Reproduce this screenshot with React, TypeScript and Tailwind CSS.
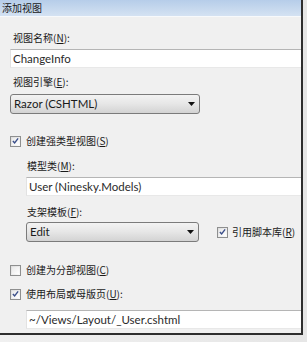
import React from "react";

const cjk = { fontFamily: '"Noto Sans CJK SC", "Noto Sans", sans-serif' };
const lat = { fontFamily: 'Lato, "Noto Sans", sans-serif' };

function Label({ text, k, colon = true }: { text: string; k: string; colon?: boolean }) {
  return (
    <div className="h-[12px] text-[10px] leading-[12px] text-[#1a1a1a] whitespace-nowrap" style={cjk}>
      {text}(<span className="underline">{k}</span>){colon ? ":" : ""}
    </div>
  );
}

function CheckBox({ checked }: { checked: boolean }) {
  return (
    <div className="w-[11px] h-[11px] border border-[#8e8f8f] bg-gradient-to-br from-[#dcdcdc] to-[#fbfbfb] flex items-center justify-center shrink-0">
      <div className="w-[7px] h-[7px] bg-gradient-to-br from-[#e9e9e9] to-[#ffffff] flex items-center justify-center">
        {checked && (
          <svg width="8" height="8" viewBox="0 0 8 8">
            <path d="M1 4 L3 6.3 L7 1" stroke="#3b4f8a" strokeWidth="1.6" fill="none" />
          </svg>
        )}
      </div>
    </div>
  );
}

function TextBox({ value }: { value: string }) {
  return (
    <div className="h-[19px] bg-white border-t border-t-[#b5b5b5] border-l border-l-[#e2e2e2] border-b border-b-[#e8e8e8] flex items-center pl-[2px]">
      <span className="text-[11.5px] leading-[14px] text-[#2a2a2a] whitespace-nowrap" style={lat}>
        {value}
      </span>
    </div>
  );
}

function Select({ value, w }: { value: string; w: string }) {
  return (
    <div
      className={`${w} h-[20px] rounded-[3px] border border-[#7b7b7b] bg-gradient-to-b from-[#f3f3f3] via-[#e6e6e6] to-[#d3d3d3] flex items-center justify-between pl-[3px] pr-[4px]`}
    >
      <span className="text-[11.5px] leading-[14px] text-[#1a1a1a] whitespace-nowrap" style={lat}>
        {value}
      </span>
      <svg width="7" height="4" viewBox="0 0 7 4">
        <path d="M0 0 H7 L3.5 4 Z" fill="#111" />
      </svg>
    </div>
  );
}

export default function App() {
  return (
    <div className="w-[307px] h-[342px] bg-gradient-to-r from-[#f0f0f0] to-[#e6e6e6] overflow-hidden flex flex-col">
      <div className="w-[303px] h-[335px] shrink-0 border-r-2 border-b-2 border-r-[#2e2e2e] border-b-[#2e2e2e] bg-[#f0f0f0] flex flex-col overflow-hidden">
        <div className="h-[16px] shrink-0 bg-gradient-to-b from-[#b6cde9] to-[#d4e2f2] flex items-center pl-[2px]">
          <div className="text-[10px] leading-[12px] text-[#1a1a1a]" style={cjk}>
            添加视图
          </div>
        </div>
        <div className="h-[1px] shrink-0 bg-[#f7f9fb]" />
        <div className="flex flex-col pl-[10px]">
          <div className="pl-[3px] mt-[15px]">
            <Label text="视图名称" k="N" />
          </div>
          <div className="mt-[5px]">
            <TextBox value="ChangeInfo" />
          </div>
          <div className="pl-[3px] mt-[8px]">
            <Label text="视图引擎" k="E" />
          </div>
          <div className="mt-[6px]">
            <Select value="Razor (CSHTML)" w="w-[190px]" />
          </div>
          <div className="flex items-center gap-[5px] mt-[21px] h-[12px]">
            <CheckBox checked />
            <Label text="创建强类型视图" k="S" colon={false} />
          </div>
          <div className="pl-[16px] flex flex-col">
            <div className="pl-[1px] mt-[13px]">
              <Label text="模型类" k="M" />
            </div>
            <div className="mt-[5px]">
              <TextBox value="User (Ninesky.Models)" />
            </div>
            <div className="pl-[1px] mt-[10px]">
              <Label text="支架模板" k="F" />
            </div>
            <div className="mt-[4px] flex items-center">
              <Select value="Edit" w="w-[173px]" />
              <div className="flex items-center gap-[4px] ml-[18px]">
                <CheckBox checked />
                <Label text="引用脚本库" k="R" colon={false} />
              </div>
            </div>
          </div>
          <div className="flex items-center gap-[5px] mt-[22px] h-[12px]">
            <CheckBox checked={false} />
            <Label text="创建为分部视图" k="C" colon={false} />
          </div>
          <div className="flex items-center gap-[5px] mt-[12px] h-[12px]">
            <CheckBox checked />
            <Label text="使用布局或母版页" k="U" />
          </div>
          <div className="pl-[16px] mt-[10px]">
            <TextBox value="~/Views/Layout/_User.cshtml" />
          </div>
        </div>
      </div>
      <div className="h-[7px]" />
    </div>
  );
}
